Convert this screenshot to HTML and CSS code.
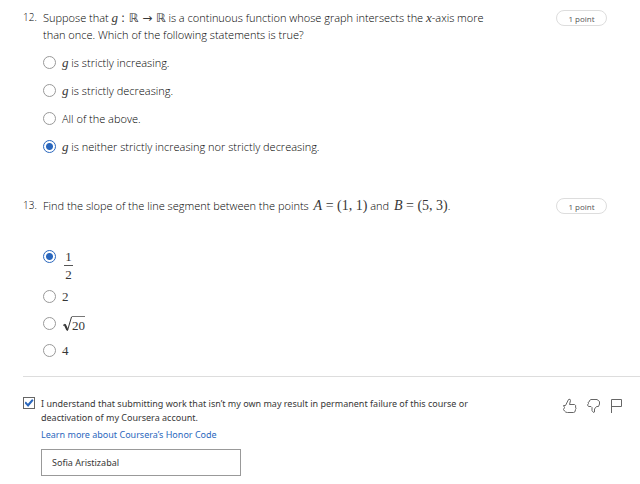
FILE: index.html
```html
<!DOCTYPE html>
<html lang="en">
<head>
<meta charset="utf-8">
<title>Quiz</title>
<link rel="stylesheet" href="styles.css">
</head>
<body>
<form class="quiz">
  <section class="question">
    <span class="number">12.</span>
    <div class="body">
      <p class="prompt">Suppose that <i class="math">g</i> <span class="mapping">: ℝ → ℝ</span> is a continuous function whose graph intersects the <i class="math">x</i>-axis more than once. Which of the following statements is true?</p>
      <div class="options">
        <label class="option"><input type="radio" name="q12"><span><i class="math">g</i> is strictly increasing.</span></label>
        <label class="option"><input type="radio" name="q12"><span><i class="math">g</i> is strictly decreasing.</span></label>
        <label class="option"><input type="radio" name="q12"><span>All of the above.</span></label>
        <label class="option"><input type="radio" name="q12" checked><span><i class="math">g</i> is neither strictly increasing nor strictly decreasing.</span></label>
      </div>
    </div>
    <span class="points">1 point</span>
  </section>

  <section class="question">
    <span class="number">13.</span>
    <div class="body">
      <p class="prompt">Find the slope of the line segment between the points <span class="math formula"><i>A</i> = (1, 1)</span> and <span class="math formula"><i>B</i> = (5, 3)</span>.</p>
      <div class="options values">
        <label class="option tall"><input type="radio" name="q13" checked><span class="math fraction"><span class="top">1</span><span>2</span></span></label>
        <label class="option"><input type="radio" name="q13"><span class="math">2</span></label>
        <label class="option"><input type="radio" name="q13"><span class="math root"><svg class="radical" viewBox="0 0 10 16" aria-hidden="true"><path d="M1 9.5 2.800 8.200 5.500 14.500 9.500 1H10" /><path class="thick" d="M2.800 8.500 5.400 14" /></svg><span class="radicand">20</span></span></label>
        <label class="option"><input type="radio" name="q13"><span class="math">4</span></label>
      </div>
    </div>
    <span class="points">1 point</span>
  </section>

  <footer class="honor">
    <input class="agree" type="checkbox" id="agree" checked>
    <div class="pledge">
      <label for="agree">I understand that submitting work that isn’t my own may result in permanent failure of this course or deactivation of my Coursera account.</label>
      <a href="#honor-code">Learn more about Coursera’s Honor Code</a>
      <input class="name" type="text" aria-label="Full name" value="Sofia Aristizabal">
    </div>
    <div class="feedback">
      <button type="button" aria-label="Like"><svg viewBox="0 0 16 16"><path d="M1.500 7.500H3.500L6.500 1.500Q8.500 .5 8.500 2.500L7.500 6.500H12.500Q14.500 7.500 13.500 9Q14.500 10.500 13.500 11.500Q13.500 14.500 11.500 14.500H5.500Q3.500 14.500 2.500 13L1.500 11.500L2.500 9.500Z"/></svg></button>
      <button type="button" aria-label="Dislike"><svg viewBox="0 0 16 16"><path d="M3.500 8.500L2.500 7L3.500 5.500L3 4.500L4.500 3.500V2.500L6 1.500H12L14.500 3.500V6L13.500 8.500H11.500L9.500 11V14L8.500 14.500L7 12.500V9.500L6 8.500Z"/></svg></button>
      <button type="button" aria-label="Report a problem"><svg viewBox="0 0 16 16"><path d="M3.500 15V1.500H13.500V8.500H3.500"/></svg></button>
    </div>
  </footer>
</form>
</body>
</html>
```
FILE: styles.css
```css
* { box-sizing: border-box; }

body {
  margin: 0;
  background: #fff;
  color: #000;
  font: 300 11px/17px "Open Sans", sans-serif;
}

.quiz { padding: 9px 0 8px 23px; }

.question {
  display: grid;
  grid-template-columns: 20px 1fr 51px;
  align-items: start;
  padding-right: 33px;
}

.question + .question { margin-top: 42px; }

.number {
  margin-top: 1px;
  font-size: 10px;
  line-height: 14px;
}

.body { padding-right: 64px; }

.prompt { margin: 0; }

.math {
  color: #373737;
  font-family: "Liberation Serif", serif;
  font-size: 13px;
  font-weight: 400;
  line-height: 1;
}

.formula {
  padding-left: 2px;
  font-size: 14px;
}

.mapping {
  color: #373737;
  font-family: "DejaVu Sans", sans-serif;
  font-size: 12px;
  font-weight: 400;
  line-height: 1;
}

.points {
  height: 16px;
  margin-top: 1px;
  border: 1px solid #ddd;
  border-radius: 8px;
  color: #555;
  font-size: 8px;
  font-weight: 400;
  line-height: 16px;
  text-align: center;
}

.options {
  display: grid;
  gap: 11px;
  margin-top: 11px;
}

.option {
  display: flex;
  align-items: center;
  gap: 6px;
  height: 17px;
}

.values { gap: 10px; margin-top: 36px; }

.option.tall { align-items: flex-start; height: 28px; }

.option input {
  appearance: none;
  flex: none;
  width: 13px;
  height: 13px;
  margin: 0;
  border: 1px solid #999;
  border-radius: 50%;
}

.option input:checked {
  border: 1px solid #2a67bd;
  background: radial-gradient(circle, #2a67bd 3px, #fff 4px);
}

.fraction {
  display: grid;
  margin-left: 2px;
  width: 9px;
  text-align: center;
}

.fraction .top {
  padding-bottom: 2px;
  margin-bottom: 2px;
  border-bottom: 1px solid #555;
}

.root { display: flex; align-items: flex-start; }

.radical {
  width: 10px;
  height: 16px;
  fill: none;
  stroke: #373737;
}

.radical .thick { stroke-width: 2; }

.radicand {
  padding-top: 2px;
  border-top: 1px solid #777;
}

.honor {
  display: grid;
  grid-template-columns: 18px 1fr 62px;
  align-items: start;
  margin-top: 17px;
  padding: 20px 16px 0 0;
  border-top: 1px solid #ddd;
  color: #373737;
  font: 400 9px/14px "Noto Sans", sans-serif;
}

.agree {
  appearance: none;
  display: grid;
  place-items: center;
  width: 12px;
  height: 12px;
  margin: 0;
  border: 1px solid #666;
}

.agree:checked::before {
  content: "";
  width: 9px;
  height: 8px;
  background: #2a67bd;
  clip-path: polygon(0 50%, 15% 32%, 38% 60%, 85% 0, 100% 18%, 40% 100%);
}

.pledge {
  display: flex;
  flex-direction: column;
  align-items: flex-start;
  padding-right: 78px;
}

.pledge a {
  margin-top: 3px;
  color: #2a67bd;
  text-decoration: none;
}

.name {
  width: 200px;
  max-width: 100%;
  height: 27px;
  margin-top: 7px;
  padding: 0 10px;
  border: 1px solid #999;
  color: inherit;
  font: inherit;
}

.feedback {
  display: flex;
  justify-content: space-between;
  padding-top: 1px;
}

.feedback button {
  padding: 0;
  border: 0;
  background: none;
}

.feedback svg {
  display: block;
  width: 16px;
  height: 16px;
  fill: none;
  stroke: #666;
}
```
